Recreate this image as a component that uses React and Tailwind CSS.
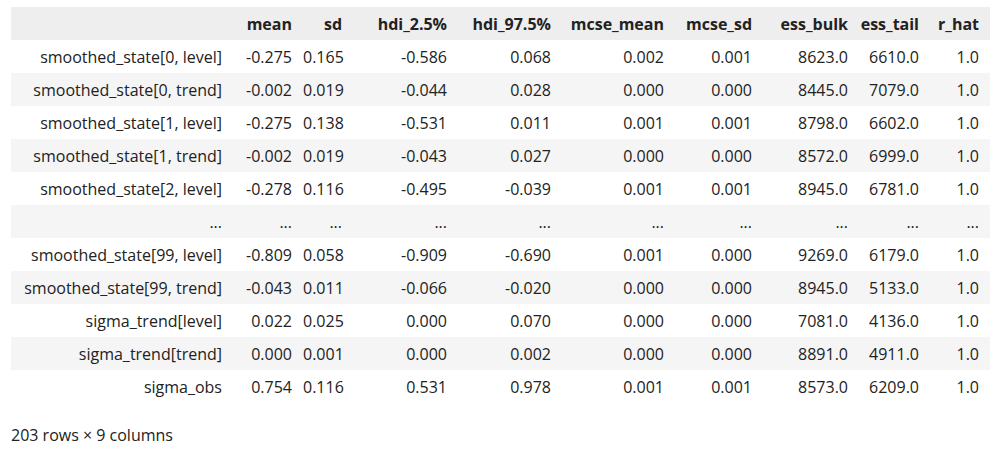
import React from 'react';

const columns = ['mean', 'sd', 'hdi_2.5%', 'hdi_97.5%', 'mcse_mean', 'mcse_sd', 'ess_bulk', 'ess_tail', 'r_hat'];

const widths = ['w-[222px]', 'w-[70px]', 'w-[50px]', 'w-[105px]', 'w-[104px]', 'w-[113px]', 'w-[88px]', 'w-[96px]', 'w-[71px]', 'w-[60px]'];

const rows = [
    ['smoothed_state[0, level]', '-0.275', '0.165', '-0.586', '0.068', '0.002', '0.001', '8623.0', '6610.0', '1.0'],
    ['smoothed_state[0, trend]', '-0.002', '0.019', '-0.044', '0.028', '0.000', '0.000', '8445.0', '7079.0', '1.0'],
    ['smoothed_state[1, level]', '-0.275', '0.138', '-0.531', '0.011', '0.001', '0.001', '8798.0', '6602.0', '1.0'],
    ['smoothed_state[1, trend]', '-0.002', '0.019', '-0.043', '0.027', '0.000', '0.000', '8572.0', '6999.0', '1.0'],
    ['smoothed_state[2, level]', '-0.278', '0.116', '-0.495', '-0.039', '0.001', '0.001', '8945.0', '6781.0', '1.0'],
    ['...', '...', '...', '...', '...', '...', '...', '...', '...', '...'],
    ['smoothed_state[99, level]', '-0.809', '0.058', '-0.909', '-0.690', '0.001', '0.000', '9269.0', '6179.0', '1.0'],
    ['smoothed_state[99, trend]', '-0.043', '0.011', '-0.066', '-0.020', '0.000', '0.000', '8945.0', '5133.0', '1.0'],
    ['sigma_trend[level]', '0.022', '0.025', '0.000', '0.070', '0.000', '0.000', '7081.0', '4136.0', '1.0'],
    ['sigma_trend[trend]', '0.000', '0.001', '0.000', '0.002', '0.000', '0.000', '8891.0', '4911.0', '1.0'],
    ['sigma_obs', '0.754', '0.116', '0.531', '0.978', '0.001', '0.001', '8573.0', '6209.0', '1.0'],
];

const SummaryTable = () => {
    return (
        <div className="min-h-screen bg-white pl-[11px] pt-[7px] text-[16px] leading-[24px] text-[#222222] font-['Open_Sans',sans-serif]">
            <table className="table-fixed border-collapse w-[979px]">
                <thead>
                    <tr className="h-[33px] bg-[#eeeeee]">
                        <th className={widths[0]}></th>
                        {columns.map((col, i) => (
                            <th key={col} className={`${widths[i + 1]} pr-[11px] text-right font-bold whitespace-nowrap`}>{col}</th>
                        ))}
                    </tr>
                </thead>
                <tbody>
                    {rows.map((row, r) => (
                        <tr key={r} className={`h-[33px] ${r % 2 === 1 ? 'bg-[#f5f5f5]' : 'bg-white'}`}>
                            {row.map((cell, c) => (
                                <td key={c} className="pr-[11px] text-right whitespace-nowrap">{cell}</td>
                            ))}
                        </tr>
                    ))}
                </tbody>
            </table>
            <p className="mt-[20px]">203 rows × 9 columns</p>
        </div>
    );
};

export default SummaryTable;
